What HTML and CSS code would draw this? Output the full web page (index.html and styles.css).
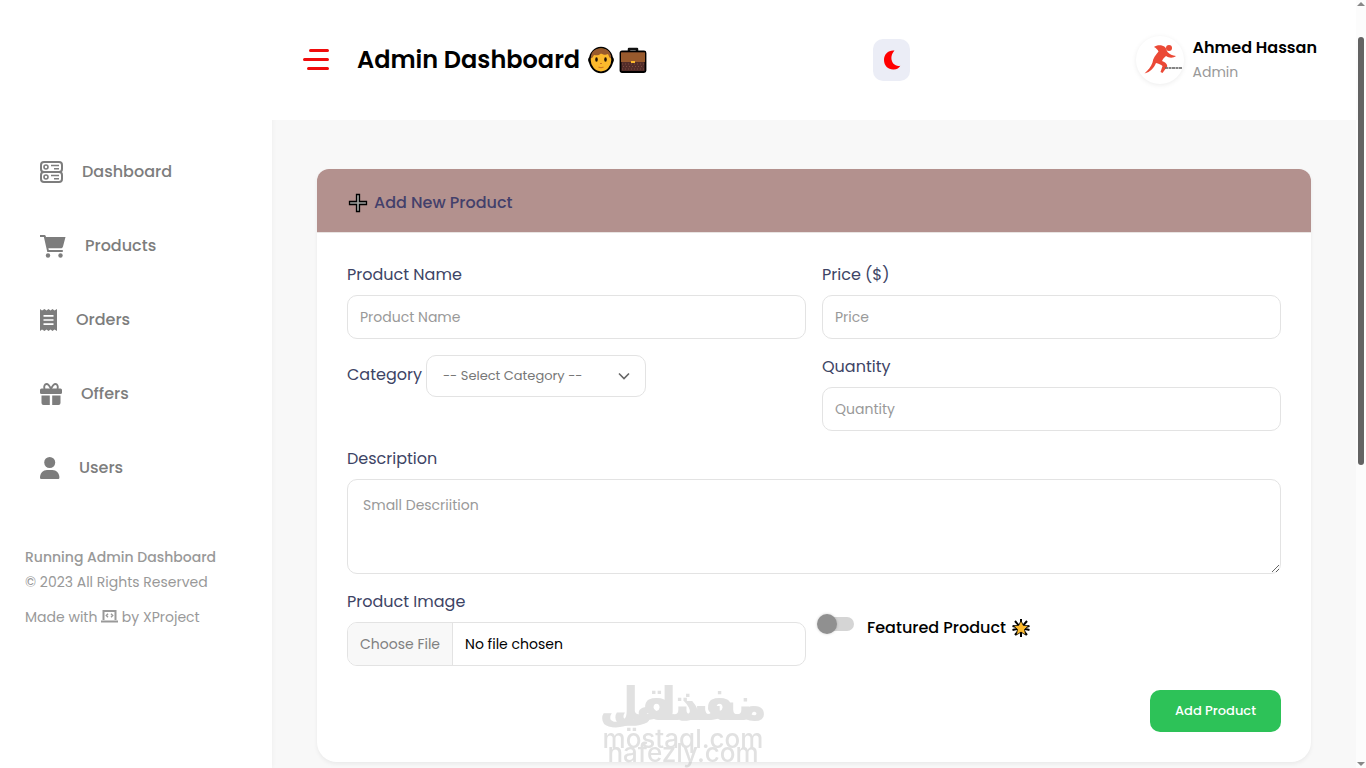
FILE: index.html
```html
<!DOCTYPE html>
<html lang="en">
<head>
  <meta charset="UTF-8" />
  <meta name="viewport" content="width=device-width, initial-scale=1.0" />
  <title>Admin Dashboard</title>
  <link rel="stylesheet" href="styles.css">
</head>
<body>
  <div class="layout">
    <aside class="sidebar">
      <nav class="menu">
        <a href="#">
          <svg width="23" height="22" viewBox="0 0 23 22" fill="none" stroke="currentColor" stroke-width="2">
            <rect x="1" y="1" width="21" height="10" rx="3"/>
            <rect x="1" y="11" width="21" height="10" rx="3"/>
            <circle cx="6" cy="6" r="2" stroke-width="1.6"/>
            <circle cx="6" cy="16" r="2" stroke-width="1.6"/>
            <path d="M11 4.5h8M14 7.800h5M11 14.500h8M14 17.800h5" stroke-width="1.5"/>
          </svg>
          <span>Dashboard</span>
        </a>
        <a href="#">
          <svg width="26" height="24" viewBox="0 0 26 24" fill="currentColor">
            <path d="M0 1h4.500c.6 0 1 .3 1.200.9L6 3h19.500L23 12.500c-.3 1.200-1 1.800-2.200 1.800H8.400l.4 1.700h14v2H7.300L3.900 3H0z"/>
            <circle cx="8" cy="21.500" r="2.200"/>
            <circle cx="20.500" cy="21.500" r="2.200"/>
          </svg>
          <span>Products</span>
        </a>
        <a href="#">
          <svg width="17" height="22" viewBox="0 0 17 22">
            <path fill="currentColor" d="M0 0l2 1.500L4.500 0l2 1.500L8.500 0l2 1.500L12.500 0l2 1.500L17 0v22l-2.500-1.500-2 1.500-2-1.500-2 1.500-2-1.500-2 1.500L2 20.500 0 22z"/>
            <path stroke="#fff" stroke-width="1.700" d="M3.500 6.800h10M3.500 11h10M3.500 15.200h10"/>
          </svg>
          <span>Orders</span>
        </a>
        <a href="#">
          <svg width="22" height="23" viewBox="0 0 22 23" fill="currentColor">
            <rect y="5.500" width="22" height="5.500" rx="1.500"/>
            <path d="M1.500 12.500h8.300V22H3.500a2 2 0 0 1-2-2zM12.200 12.500h8.300V20a2 2 0 0 1-2 2h-6.300z"/>
            <path fill="none" stroke="currentColor" stroke-width="1.900" d="M11 6C9.500 2.500 8 1 6.500 1S3.500 3 4.500 6M11 6c1.500-3.500 3-5 4.500-5s3 2 2 5"/>
          </svg>
          <span>Offers</span>
        </a>
        <a href="#">
          <svg width="20" height="22" viewBox="0 0 20 22" fill="currentColor">
            <circle cx="9.700" cy="5.500" r="5.500"/>
            <path d="M0 20.500C0 16 3.200 13 7 13h5.400c3.800 0 7 3 7 7.500 0 1-.6 1.500-1.500 1.500H1.500C.6 22 0 21.500 0 20.500z"/>
          </svg>
          <span>Users</span>
        </a>
      </nav>
      <footer class="copyright">
        <strong>Running Admin Dashboard</strong>
        <p>© 2023 All Rights Reserved</p>
        <p class="made">Made with
          <svg width="17" height="13" viewBox="0 0 17 13" fill="none" stroke="currentColor" stroke-width="2">
            <path d="M2.500 10V1h12v9M0 11.500h17"/>
            <path stroke-width="1.400" d="M7 3.800L5.300 5.500 7 7.200M10 3.800l1.700 1.700L10 7.200"/>
          </svg>
          by XProject</p>
      </footer>
    </aside>

    <div class="content">
      <header class="topbar">
        <div class="title">
          <button type="button" class="menu-btn" aria-label="Toggle menu">
            <svg width="26" height="22" viewBox="0 0 26 22" stroke="#f00c0c" stroke-width="3" stroke-linecap="round">
              <path d="M7.500 1.500h17M1.500 10.500h23M5.500 19.500h19"/>
            </svg>
          </button>
          <h1>Admin Dashboard</h1>
          <div class="emojis">
            <svg width="26" height="28" viewBox="0 0 26 28">
              <path d="M3 12h-1.500c-1 1-.8 4 .7 5M23 12h1.500c1 1 .8 4-.7 5" fill="#fbb92b" stroke="#000" stroke-width="1.500"/>
              <ellipse cx="13" cy="14" rx="11.200" ry="12.300" fill="#fcb92c" stroke="#000" stroke-width="1.800"/>
              <path d="M2.800 12.500C3 5 7 2.500 13 2.500S23 5 23.200 12.500l-1.700-1-1.500-3.500c-3 1.500-5 .5-7-.5-2 2-5 2-7 1.500l-1.500 2.500z" fill="#985a2d"/>
              <ellipse cx="8.500" cy="13.500" rx="1.300" ry="2.200" fill="#221207"/>
              <ellipse cx="17.500" cy="13.500" rx="1.300" ry="2.200" fill="#221207"/>
              <path d="M12 17.500h2M10.500 21c1.700.9 3.300.9 5 0" fill="none" stroke="#cf7822" stroke-width="1.200"/>
            </svg>
            <svg width="28" height="28" viewBox="0 0 28 28">
              <path d="M10 5.500V3h8v2.500" fill="none" stroke="#111" stroke-width="2.500" stroke-linejoin="round"/>
              <rect x="1.500" y="5.500" width="25" height="20.500" rx="1.500" fill="#532d29" stroke="#000" stroke-width="1.800"/>
              <path d="M2 6.400h24V16H2z" fill="#985a2d"/>
              <path d="M3 18h22M4 20.500h20M3 23h22" stroke="#7c4b42" stroke-dasharray="1 2"/>
              <rect x="12" y="15" width="4" height="2" fill="#fcb92c"/>
            </svg>
          </div>
        </div>

        <button type="button" class="theme-btn" aria-label="Dark mode">
          <svg width="18" height="20" viewBox="0 0 18 20">
            <path fill="#f00" d="M11.500.5C5.500-.2 1 4 1 10s4.500 9.800 9.700 9.500c3.200-.2 5.400-1.600 6.600-3.800C10.500 17.500 4.500 8.500 11.500.5z"/>
          </svg>
        </button>

        <div class="profile">
          <div class="avatar">
            <svg width="48" height="48" viewBox="0 0 48 48">
              <g fill="#eb4936">
                <circle cx="33" cy="12" r="3"/>
                <path d="M18 11c3-2.500 8-2.500 11 0 1.500 1.500 1.500 3.500 2.500 5 2 2.500 5 3.300 8.500 4-2.500 2-6.500 2.500-10 0-2 1.500-3 3-4 5 3 1 5.500 3 5.200 5.500L26.500 37l-2-1 2-6c-1.500-1.500-4-2.500-6.500-3-2 5-5.500 9-11.500 10.500 4-3.500 6.500-7 8-11 .5-4 3-7.500 6-11-1-2-2.500-3.500-4.500-4.500z"/>
              </g>
              <path d="M29 32h17" stroke="#666" stroke-width="2" stroke-dasharray="3 .5" opacity=".8"/>
            </svg>
          </div>
          <div>
            <h2>Ahmed Hassan</h2>
            <p>Admin</p>
          </div>
        </div>
      </header>

      <main class="page">
        <section class="card">
          <div class="card-header">
            <svg width="20" height="20" viewBox="0 0 20 20">
              <path d="M8.500 1.500h3v7h7v3h-7v7h-3v-7h-7v-3h7z" fill="#a0a3a0" stroke="#000" stroke-width="1.300"/>
            </svg>
            <h3>Add New Product</h3>
          </div>
          <form class="product-form">
            <div class="field">
              <label for="name">Product Name</label>
              <input type="text" id="name" placeholder="Product Name">
            </div>
            <div class="field">
              <label for="price">Price ($)</label>
              <input type="text" id="price" placeholder="Price">
            </div>
            <div class="field-inline">
              <label for="category">Category</label>
              <div class="select">
                <select id="category">
                  <option>-- Select Category --</option>
                </select>
                <svg width="12" height="8" viewBox="0 0 12 8" fill="none" stroke="#666" stroke-width="1.600">
                  <path d="M1 1.500l5 5 5-5"/>
                </svg>
              </div>
            </div>
            <div class="field">
              <label for="quantity">Quantity</label>
              <input type="text" id="quantity" placeholder="Quantity">
            </div>
            <div class="field full">
              <label for="description">Description</label>
              <textarea id="description" placeholder="Small Descriition"></textarea>
            </div>
            <div class="field">
              <label for="image">Product Image</label>
              <input type="file" id="image">
            </div>
            <div class="featured">
              <input type="checkbox" id="featured">
              <label for="featured">Featured Product</label>
              <svg width="20" height="20" viewBox="0 0 20 20">
                <path d="M10 1v18M1.500 8l17 4M1.500 12l17-4M4 3l12 14M16 3L4 17" stroke="#000" stroke-width="2"/>
                <path d="M10 2.500l2.200 4.800 5.300.6-4 3.500 1.200 5.600-4.700-2.900L5.300 17l1.200-5.600-4-3.500 5.300-.6z" fill="#fcb92c" stroke="#000" stroke-width=".8"/>
              </svg>
            </div>
            <div class="actions full">
              <button type="submit" class="btn">Add Product</button>
            </div>
          </form>
        </section>
      </main>
    </div>

    <div class="scrollbar" aria-hidden="true">
      <i class="arrow up"></i>
      <div class="thumb"></div>
      <i class="arrow down"></i>
    </div>
  </div>

  <div class="watermark" aria-hidden="true">
    <div class="mark" lang="ar" dir="rtl">
      <span>مستقل</span>
      <span>نفذلي</span>
    </div>
    <p>mostaql.com</p>
    <p>nafezly.com</p>
  </div>
</body>
</html>
```

FILE: styles.css
```css
* {
  margin: 0;
  padding: 0;
  box-sizing: border-box;
}
body {
  font-family: Poppins, Inter, sans-serif;
  font-size: 16px;
  line-height: 24px;
  background: #f8f8f8;
  color: #000;
  height: 100vh;
  overflow: hidden;
}
svg {
  flex-shrink: 0;
}
.layout {
  display: flex;
  height: 100vh;
}

/* sidebar */
.sidebar {
  width: 272px;
  flex-shrink: 0;
  background: #fff;
  padding-top: 160px;
  box-shadow: 0 0 5px rgba(0, 0, 0, 0.05);
}
.menu {
  display: flex;
  flex-direction: column;
  gap: 50px;
  padding-left: 40px;
}
.menu a {
  display: flex;
  align-items: center;
  gap: 19px;
  height: 24px;
  color: #7d7d7d;
  font-weight: 500;
  text-decoration: none;
}
.copyright {
  margin-top: 65px;
  padding-left: 25px;
  font-size: 14px;
  line-height: 25px;
  color: #999;
}
.copyright strong {
  font-weight: 500;
}
.copyright .made {
  margin-top: 10px;
}
.made svg {
  vertical-align: -1px;
}

/* top bar */
.content {
  flex: 1;
  min-width: 0;
}
.topbar {
  display: flex;
  align-items: center;
  justify-content: space-between;
  height: 120px;
  padding: 0 39px 0 31px;
  background: #fff;
}
.title {
  display: flex;
  align-items: center;
}
.menu-btn {
  display: flex;
  margin-right: 28px;
  border: 0;
  background: none;
}
.title h1 {
  font-size: 24px;
  line-height: 36px;
  font-weight: 600;
}
.emojis {
  display: flex;
  gap: 5px;
  margin-left: 8px;
}
.theme-btn {
  display: flex;
  align-items: center;
  justify-content: center;
  width: 37px;
  height: 42px;
  border: 0;
  border-radius: 10px;
  background: #ebedf6;
}
.profile {
  display: flex;
  align-items: center;
  gap: 8px;
}
.avatar {
  display: flex;
  width: 48px;
  height: 48px;
  border-radius: 50%;
  overflow: hidden;
  box-shadow: 0 1px 5px rgba(0, 0, 0, 0.08);
}
.profile h2 {
  font-size: 16px;
  line-height: 24px;
  font-weight: 600;
}
.profile p {
  font-size: 14px;
  color: #999;
}

/* product card */
.page {
  padding: 49px 45px;
}
.card {
  background: #fff;
  border-radius: 12px 12px 20px 20px;
  box-shadow: 0 2px 4px rgba(0, 0, 0, 0.06);
}
.card-header {
  display: flex;
  align-items: center;
  gap: 6px;
  height: 64px;
  padding: 4px 31px 0;
  border-bottom: 1px solid #e8e4e2;
  border-radius: 12px 12px 0 0;
  background: #b3918e;
}
.card-header h3 {
  font-size: 16px;
  font-weight: 500;
  color: #43406b;
}
.product-form {
  display: grid;
  grid-template-columns: 1fr 1fr;
  gap: 16px;
  padding: 30px;
}
.full {
  grid-column: 1 / -1;
}
.field {
  display: flex;
  flex-direction: column;
  gap: 8px;
}
.field label,
.field-inline label {
  color: #3d4465;
}
input,
select,
textarea,
button {
  font-family: inherit;
  font-size: 14px;
}
.field input,
.field textarea,
.select select {
  border: 1px solid #e3e3e3;
  border-radius: 10px;
  background: #fff;
}
.field input {
  width: 100%;
  height: 44px;
  padding: 0 12px;
}
.field textarea {
  width: 100%;
  height: 95px;
  padding: 13px 15px;
  line-height: 24px;
}
.field ::placeholder {
  color: #999;
}
.field input[type="file"] {
  padding: 0;
  overflow: hidden;
  line-height: 40px;
}
.field input::file-selector-button {
  height: 42px;
  margin-right: 12px;
  padding: 0 12px;
  border: 0;
  border-right: 1px solid #e3e3e3;
  background: #f8f8f8;
  color: #808080;
  font-family: inherit;
  font-size: 14px;
}
.field-inline {
  display: flex;
  align-items: flex-start;
  gap: 4px;
}
.field-inline label {
  padding-top: 8px;
}
.select {
  display: grid;
  align-items: center;
  width: 220px;
}
.select select,
.select svg {
  grid-area: 1 / 1;
}
.select svg {
  justify-self: end;
  margin-right: 16px;
  pointer-events: none;
}
.select select {
  appearance: none;
  width: 100%;
  height: 42px;
  padding: 0 16px 2px;
  font-size: 13px;
  color: #777;
}
.featured {
  display: flex;
  align-items: flex-start;
  gap: 5px;
  padding-top: 26px;
}
.featured input {
  appearance: none;
  display: flex;
  align-items: center;
  width: 34px;
  height: 14px;
  margin: 1px 8px 0 -2px;
  border-radius: 7px;
  background: #d5d5d5;
}
.featured input::before {
  content: "";
  width: 20px;
  height: 20px;
  margin-left: -3px;
  border-radius: 50%;
  background: #909090;
  box-shadow: 0 0 3px rgba(0, 0, 0, 0.2);
}
.featured label {
  font-weight: 500;
}
.featured svg {
  margin-top: 2px;
}
.actions {
  display: flex;
  justify-content: flex-end;
  padding-top: 8px;
}
.btn {
  width: 131px;
  height: 42px;
  border: 0;
  border-radius: 10px;
  background: #2dc258;
  color: #fff;
  font-size: 13px;
  font-weight: 500;
}

/* scrollbar */
.scrollbar {
  display: flex;
  flex-direction: column;
  align-items: center;
  width: 10px;
  padding: 2px 0;
  background: #fcfcfc;
}
.thumb {
  width: 6px;
  height: 56%;
  margin-top: 31px;
  border-radius: 3px;
  background: #636363;
}
.arrow {
  border: 4px solid transparent;
}
.arrow.up {
  border-top: 0;
  border-bottom-color: #888;
}
.arrow.down {
  margin-top: auto;
  border-bottom: 0;
  border-top-color: #888;
}

/* watermark over the page */
.watermark {
  position: fixed;
  left: 50%;
  bottom: 8px;
  transform: translateX(-50%);
  text-align: center;
  font-family: Inter, sans-serif;
  color: #b4b4b4;
  opacity: 0.4;
  pointer-events: none;
}
.mark {
  display: grid;
  justify-items: center;
  font-family: "DejaVu Sans", sans-serif;
  font-size: 46px;
  font-weight: 700;
  line-height: 56px;
}
.mark span {
  grid-area: 1 / 1;
}
.watermark p {
  font-size: 26px;
  font-weight: 500;
  line-height: 14px;
}
```
